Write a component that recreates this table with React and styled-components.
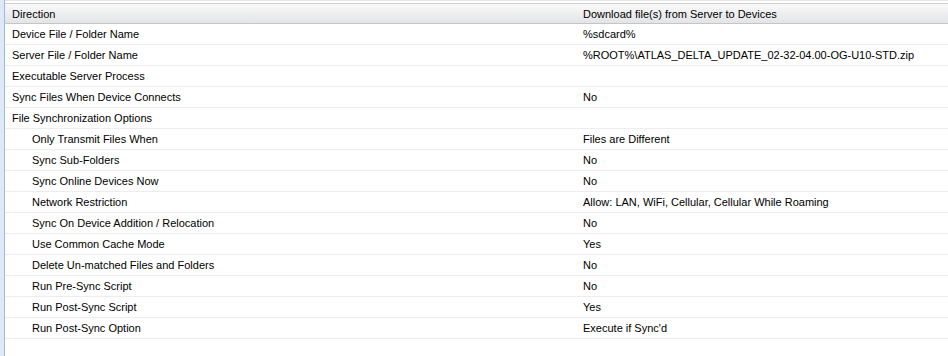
import React from "react";
import styled, { createGlobalStyle } from "styled-components";

const Global = createGlobalStyle`
  html, body { margin: 0; padding: 0; background: #fff; }
  body { font-family: "Liberation Sans", Arial, sans-serif; font-size: 11px; color: #000; }
`;

const Page = styled.div`
  display: flex;
  height: 356px;
  width: 948px;
  overflow: hidden;
`;

const SideEdge = styled.div`
  width: 4px;
  flex: none;
  background: #dfe8f6;
  border-right: 1px solid #99bbe8;
`;

const Grid = styled.div`
  flex: 1;
  padding-top: 2px;
  display: flex;
  flex-direction: column;
  background: #fff;
  border-top: 1px solid #e4e4e4;
`;

const HeaderRow = styled.div`
  display: grid;
  grid-template-columns: 571px 1fr;
  height: 19px;
  background: linear-gradient(#f9f9f9, #e3e4e6);
  border-top: 1px solid #d0d0d0;
  border-bottom: 1px solid #c5c5c5;
`;

const HeaderCell = styled.div`
  display: flex;
  align-items: center;
  padding-left: ${(p) => p.$pad}px;
  color: #000;
`;

const Row = styled.div`
  display: grid;
  grid-template-columns: 571px 1fr;
  height: 20px;
  border-bottom: 1px solid #ededed;
`;

const Cell = styled.div`
  display: flex;
  align-items: center;
  padding-left: ${(p) => p.$pad}px;
  white-space: nowrap;
  color: #000;
`;

const rows = [
  ["Device File / Folder Name", "%sdcard%", 0],
  ["Server File / Folder Name", "%ROOT%\\ATLAS_DELTA_UPDATE_02-32-04.00-OG-U10-STD.zip", 0],
  ["Executable Server Process", "", 0],
  ["Sync Files When Device Connects", "No", 0],
  ["File Synchronization Options", "", 0],
  ["Only Transmit Files When", "Files are Different", 1],
  ["Sync Sub-Folders", "No", 1],
  ["Sync Online Devices Now", "No", 1],
  ["Network Restriction", "Allow: LAN, WiFi, Cellular, Cellular While Roaming", 1],
  ["Sync On Device Addition / Relocation", "No", 1],
  ["Use Common Cache Mode", "Yes", 1],
  ["Delete Un-matched Files and Folders", "No", 1],
  ["Run Pre-Sync Script", "No", 1],
  ["Run Post-Sync Script", "Yes", 1],
  ["Run Post-Sync Option", "Execute if Sync'd", 1],
];

export default function App() {
  return (
    <>
      <Global />
      <Page>
        <SideEdge />
        <Grid>
          <HeaderRow>
            <HeaderCell $pad={7}>Direction</HeaderCell>
            <HeaderCell $pad={7}>Download file(s) from Server to Devices</HeaderCell>
          </HeaderRow>
          {rows.map(([k, v, indent]) => (
            <Row key={k}>
              <Cell $pad={indent ? 27 : 7}>{k}</Cell>
              <Cell $pad={7}>{v}</Cell>
            </Row>
          ))}
        </Grid>
      </Page>
    </>
  );
}
